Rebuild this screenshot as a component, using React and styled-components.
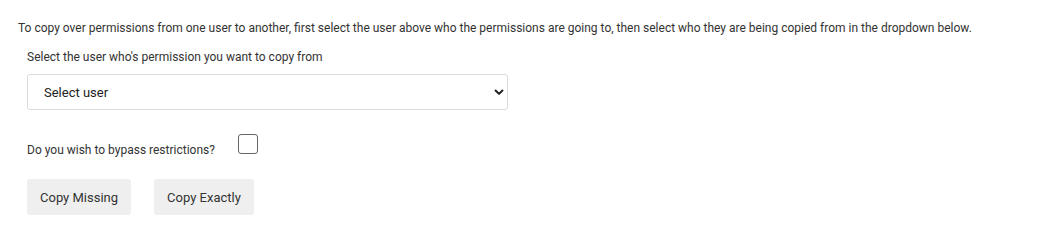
import React from "react";
import styled, { createGlobalStyle } from "styled-components";

const Global = createGlobalStyle`
  html, body { margin: 0; padding: 0; background: #fff; }
  body { font-family: Roboto, "Noto Sans", Arial, sans-serif; color: #333; }
  * { box-sizing: border-box; }
`;

const Page = styled.div`
  padding: 20px 18px;
`;

const Intro = styled.p`
  margin: 0;
  font-size: 12px;
  line-height: 16px;
  color: #333;
`;

const Section = styled.div`
  padding-left: 9px;
  margin-top: 13px;
`;

const Label = styled.label`
  display: block;
  font-size: 12px;
  line-height: 16px;
  color: #333;
`;

const SelectWrap = styled.div`
  position: relative;
  width: 481px;
  margin-top: 9px;
`;

const Select = styled.select`
  appearance: none;
  -webkit-appearance: none;
  width: 100%;
  height: 36px;
  padding: 0 30px 0 16px;
  border: 1px solid #dcdcdc;
  border-radius: 3px;
  background: #fff;
  font-family: Roboto, "Noto Sans", Arial, sans-serif;
  font-size: 13px;
  color: #222;
  outline: none;
`;

const Chevron = styled.svg`
  position: absolute;
  right: 4px;
  top: 13px;
  width: 10px;
  height: 10px;
  pointer-events: none;
`;

const CheckRow = styled.div`
  display: flex;
  align-items: center;
  margin-top: 20px;
  gap: 23px;
`;

const CheckLabel = styled.span`
  font-size: 12px;
  line-height: 16px;
  color: #333;
  margin-top: 12px;
`;

const Box = styled.span`
  display: inline-block;
  width: 20px;
  height: 20px;
  border: 1.5px solid #666;
  border-radius: 3px;
  background: #fff;
`;

const Buttons = styled.div`
  display: flex;
  gap: 23px;
  margin-top: 21px;
`;

const Button = styled.button`
  height: 36px;
  padding: 0 13px;
  border: none;
  border-radius: 3px;
  background: #efefef;
  font-family: Roboto, "Noto Sans", Arial, sans-serif;
  font-size: 13px;
  color: #333;
  cursor: pointer;
`;

export default function App() {
  return (
    <>
      <Global />
      <Page>
        <Intro>
          To copy over permissions from one user to another, first select the user above who the
          permissions are going to, then select who they are being copied from in the dropdown below.
        </Intro>
        <Section>
          <Label>Select the user who's permission you want to copy from</Label>
          <SelectWrap>
            <Select defaultValue="">
              <option value="">Select user</option>
            </Select>
            <Chevron viewBox="0 0 16 16">
              <path d="M2.5 5.5l5.5 5.5 5.5-5.5" fill="none" stroke="#222" strokeWidth="3.2" strokeLinecap="round" strokeLinejoin="round" />
            </Chevron>
          </SelectWrap>
          <CheckRow>
            <CheckLabel>Do you wish to bypass restrictions?</CheckLabel>
            <Box />
          </CheckRow>
          <Buttons>
            <Button>Copy Missing</Button>
            <Button>Copy Exactly</Button>
          </Buttons>
        </Section>
      </Page>
    </>
  );
}
